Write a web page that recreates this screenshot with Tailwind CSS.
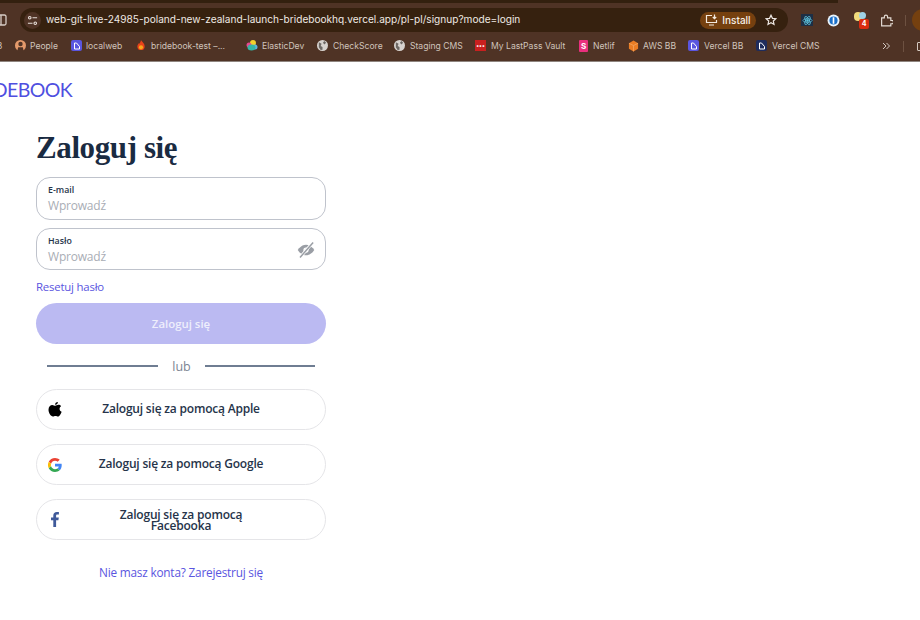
<!doctype html>
<html>
<head>
<meta charset="utf-8">
<title>Zaloguj się</title>
<script src="https://cdn.jsdelivr.net/npm/@tailwindcss/browser@4"></script>
</head>
<body class="h-[620px] w-[920px] overflow-hidden bg-white font-['Open_Sans',sans-serif]">

<!-- browser chrome -->
<div class="h-[62px] bg-[#4f3325] overflow-hidden border-b border-[#8f857f]">
  <div class="h-[3px] bg-[#33200f] w-[838px]"></div>
  <div class="h-[24px] mt-[5px] flex items-center font-['Inter',sans-serif]">
    <svg class="w-[7px] h-[12px] shrink-0" viewBox="0 0 7 12" fill="none" stroke="#d8cdc6" stroke-width="1.3"><rect x="-5" y="1" width="11" height="10" rx="1.5"/><path d="M1 1v10"/></svg>
    <div class="ml-[13px] w-[768px] h-[24px] rounded-full bg-[#36210f] flex items-center shrink-0">
      <div class="ml-[4px] w-[17px] h-[17px] rounded-full bg-[#4f3325] flex items-center justify-center">
        <svg class="w-[11px] h-[11px]" viewBox="0 0 12 12" fill="none" stroke="#e8e0da" stroke-width="1.2"><circle cx="3" cy="3" r="1.4"/><path d="M6 3h5M1 9h5"/><circle cx="9" cy="9" r="1.4"/></svg>
      </div>
      <span class="ml-[5px] text-[10.1px] text-[#efe9e4] whitespace-nowrap">web-git-live-24985-poland-new-zealand-launch-bridebookhq.vercel.app/pl-pl/signup?mode=login</span>
      <div class="ml-auto flex items-center">
        <div class="h-[17px] w-[56px] rounded-full bg-[#75400f] flex items-center justify-center gap-[4px]">
          <svg class="w-[13px] h-[12px]" viewBox="0 0 13 12" fill="none" stroke="#f3e9df" stroke-width="1.2"><path d="M7 1.500H1.500v7h10V6M4 11h5M9.500 0.500v4M7.800 3l1.700 1.700L11.200 3"/></svg>
          <span class="text-[10px] font-medium text-[#f6efe8]">Install</span>
        </div>
        <svg class="ml-[9px] mr-[11px] w-[12px] h-[12px]" viewBox="0 0 24 24" fill="none" stroke="#efe9e4" stroke-width="2.400"><path d="M12 2.500l2.900 6.200 6.700.8-5 4.600 1.400 6.700-6-3.400-6 3.400 1.400-6.700-5-4.600 6.700-.8z"/></svg>
      </div>
    </div>
    <div class="ml-[13px] w-[12px] h-[12px] bg-[#1d2f45] flex items-center justify-center shrink-0">
      <svg class="w-[11px] h-[11px]" viewBox="0 0 24 24" fill="none" stroke="#5fc4de" stroke-width="1.600"><ellipse cx="12" cy="12" rx="10" ry="4"/><ellipse cx="12" cy="12" rx="10" ry="4" transform="rotate(60 12 12)"/><ellipse cx="12" cy="12" rx="10" ry="4" transform="rotate(120 12 12)"/><circle cx="12" cy="12" r="2" fill="#5fc4de"/></svg>
    </div>
    <svg class="ml-[14px] w-[13px] h-[13px] shrink-0" viewBox="0 0 24 24"><circle cx="12" cy="12" r="11" fill="#e9f3fb"/><circle cx="12" cy="12" r="7.500" fill="#1a6fc9"/><rect x="10.500" y="6" width="3" height="12" fill="#fff"/></svg>
    <div class="relative ml-[14px] w-[12px] h-[14px] shrink-0">
      <div class="absolute left-0 top-[-1px] w-[8px] h-[9px] rounded-full bg-[#f2dc7c]"></div>
      <div class="absolute left-[5px] top-[-1px] w-[7px] h-[7px] rounded-full bg-[#9ed1e6]"></div>
      <div class="absolute left-[5px] top-[6px] w-[10px] h-[10px] rounded-[2px] bg-[#d92b0f] text-white text-[7px] font-bold leading-[10px] text-center">4</div>
    </div>
    <svg class="ml-[14px] w-[13px] h-[13px] shrink-0" viewBox="0 0 24 24" fill="none" stroke="#e4dbd4" stroke-width="2.200"><path d="M3 7h5V5a3 3 0 0 1 6 0v2h6v5h2a3 3 0 0 1 0 6h-2v4H3z"/></svg>
    <div class="ml-[12px] w-px h-[11px] bg-[#6d5141] shrink-0"></div>
    <div class="ml-[6px] w-[22px] h-[22px] rounded-full bg-[#75400f] shrink-0"></div>
  </div>
  <div class="h-[28px] flex items-center text-[8.6px] text-[#cfc4bc] font-['Inter',sans-serif] whitespace-nowrap">
    <span class="w-[18px] -ml-[3px] shrink-0">3</span>
    <div class="flex items-center w-[56px] gap-[4px] shrink-0">
      <svg class="w-[11px] h-[11px] shrink-0" viewBox="0 0 12 12"><circle cx="6" cy="6" r="6" fill="#e49a6b"/><circle cx="6" cy="4.400" r="2.400" fill="#4f3325"/><path d="M2.500 12l1-4h5l1 4z" fill="#4f3325"/></svg>
      <span>People</span>
    </div>
    <div class="flex items-center w-[65px] gap-[4px] shrink-0">
      <div class="w-[11px] h-[11px] rounded-[2px] bg-[#5a55e0] flex items-center justify-center shrink-0"><svg class="w-[8px] h-[8px]" viewBox="0 0 8 8" fill="none" stroke="#fff" stroke-width="1"><path d="M1.500 1h2l3 3.500v2.500h-5z"/></svg></div>
      <span>localweb</span>
    </div>
    <div class="flex items-center w-[110px] gap-[5px] shrink-0">
      <svg class="w-[10px] h-[11px] shrink-0" viewBox="0 0 10 12"><path d="M5 0c1 2 4 3.500 4 7a4 4 0 0 1-8 0c0-1.500 1-2.500 1.500-3.500C3 4.500 4 4 5 0z" fill="#e8431a"/><circle cx="5" cy="8" r="2.300" fill="#f7a81b"/></svg>
      <span>bridebook-test –...</span>
    </div>
    <div class="flex items-center w-[71px] gap-[4px] shrink-0">
      <svg class="w-[12px] h-[12px] shrink-0" viewBox="0 0 12 12"><circle cx="7" cy="3" r="3" fill="#f5cf2c"/><circle cx="3" cy="5" r="2.500" fill="#e8478f"/><circle cx="9" cy="7" r="2.500" fill="#5fb3e0"/><ellipse cx="5.500" cy="7.500" rx="4" ry="3" fill="#36b5a5"/></svg>
      <span>ElasticDev</span>
    </div>
    <div class="flex items-center w-[77px] gap-[5px] shrink-0">
      <svg class="w-[11px] h-[11px] shrink-0" viewBox="0 0 12 12"><circle cx="6" cy="6" r="6" fill="#d7d2ce"/><path d="M2 2.500l3 1.500-1 2.500 2 1v3l-2 .5-2-3zM8 1l2 2-2 2-1.500-2z" fill="#6d6864"/></svg>
      <span>CheckScore</span>
    </div>
    <div class="flex items-center w-[81px] gap-[5px] shrink-0">
      <svg class="w-[11px] h-[11px] shrink-0" viewBox="0 0 12 12"><circle cx="6" cy="6" r="6" fill="#d7d2ce"/><path d="M2 2.500l3 1.500-1 2.500 2 1v3l-2 .5-2-3zM8 1l2 2-2 2-1.500-2z" fill="#6d6864"/></svg>
      <span>Staging CMS</span>
    </div>
    <div class="flex items-center w-[103px] gap-[5px] shrink-0">
      <div class="w-[11px] h-[11px] bg-[#c9201f] flex items-center justify-center shrink-0 text-white text-[6px] leading-none font-bold">•••</div>
      <span>My LastPass Vault</span>
    </div>
    <div class="flex items-center w-[50px] gap-[5px] pl-[1px] shrink-0">
      <div class="w-[9px] h-[12px] rounded-[1px] bg-[#ea2f7d] flex items-center justify-center shrink-0 text-white text-[8px] leading-none font-bold">S</div>
      <span>Netlif</span>
    </div>
    <div class="flex items-center w-[60px] gap-[4px] shrink-0">
      <svg class="w-[11px] h-[12px] shrink-0" viewBox="0 0 12 12"><path d="M6 0l5 3v6l-5 3-5-3V3z" fill="#ea7d24"/><path d="M6 5.500l5-2.500M6 5.500L1 3M6 5.500V12" stroke="#f6ae6e" stroke-width=".7"/></svg>
      <span>AWS BB</span>
    </div>
    <div class="flex items-center w-[68px] gap-[5px] shrink-0">
      <div class="w-[11px] h-[11px] rounded-[2px] bg-[#5a55e0] flex items-center justify-center shrink-0"><svg class="w-[8px] h-[8px]" viewBox="0 0 8 8" fill="none" stroke="#fff" stroke-width="1"><path d="M1.500 1h2l3 3.500v2.500h-5z"/></svg></div>
      <span>Vercel BB</span>
    </div>
    <div class="flex items-center w-[126px] gap-[5px] shrink-0">
      <div class="w-[11px] h-[11px] rounded-[2px] bg-[#1f2c5c] flex items-center justify-center shrink-0"><svg class="w-[8px] h-[8px]" viewBox="0 0 8 8" fill="none" stroke="#fff" stroke-width="1"><path d="M1.500 1h2l3 3.500v2.500h-5z"/></svg></div>
      <span>Vercel CMS</span>
    </div>
    <svg class="w-[8px] h-[8px] shrink-0" viewBox="0 0 8 8" fill="none" stroke="#d4c9c1" stroke-width="1"><path d="M1 1l3 3-3 3M4.500 1l3 3-3 3"/></svg>
    <div class="ml-[13px] w-px h-[11px] bg-[#6d5141] shrink-0"></div>
    <div class="ml-[13px] w-[8px] h-[9px] border border-[#d4c9c1] rounded-[1px] shrink-0"></div>
  </div>
</div>

<!-- logo -->
<div class="h-[58px] relative overflow-hidden">
  <span class="absolute right-[848px] top-[17px] text-[19.5px] leading-[22px] text-[#4f4fe0] font-['Lato',sans-serif] tracking-[-0.6px]">BRIDEBOOK</span>
</div>

<!-- form -->
<div class="ml-[36px] w-[290px]">
  <h1 class="text-[31px] leading-[38px] font-bold text-[#1a2b42] font-['Liberation_Serif',serif] pt-[2px] mt-[7px] h-[38px] tracking-[-0.4px]">Zaloguj się</h1>
  <div class="mt-[12px] h-[43px] rounded-[14px] border border-[#bfc3cc] px-[11px] pt-[6px]">
    <div class="text-[8.800px] leading-[13px] font-semibold text-[#26344a]">E-mail</div>
    <div class="text-[12px] leading-[18px] tracking-[-0.2px] text-[#a9adb5]">Wprowadź</div>
  </div>
  <div class="mt-[8px] h-[42px] rounded-[14px] border border-[#bfc3cc] px-[11px] pt-[6px] flex justify-between">
    <div>
      <div class="text-[8.800px] leading-[13px] font-semibold text-[#26344a]">Hasło</div>
      <div class="text-[12px] leading-[18px] tracking-[-0.2px] text-[#a9adb5]">Wprowadź</div>
    </div>
    <svg class="w-[18px] h-[18px] mt-[6px] -mr-[1px]" viewBox="0 0 24 24" fill="none"><path d="M1 12s4-7 11-7 11 7 11 7-4 7-11 7S1 12 1 12z" fill="#9a9ea5"/><circle cx="12" cy="12" r="3.500" fill="#fff"/><circle cx="12" cy="12" r="1.600" fill="#9a9ea5"/><path d="M21 2L4 22" stroke="#fff" stroke-width="4"/><path d="M21.500 2L4 22" stroke="#9a9ea5" stroke-width="2"/></svg>
  </div>
  <a class="block mt-[9px] text-[11.400px] leading-[16px] tracking-[-0.2px] text-[#5a55e0]">Resetuj hasło</a>
  <div class="mt-[8px] h-[41px] rounded-full bg-[#bbbaf2] flex items-center justify-center text-[11.400px] font-semibold text-[#eeeefc]">Zaloguj się</div>
  <div class="mt-[14px] px-[11px] flex items-center h-[17px]">
    <div class="w-[111px] h-[2px] bg-[#6f7d92] -mt-[2px]"></div>
    <span class="flex-1 text-center text-[12.500px] text-[#7c8592] pt-[1px]">lub</span>
    <div class="w-[110px] h-[2px] bg-[#6f7d92] -mt-[2px]"></div>
  </div>
  <div class="mt-[14px] relative h-[41px] rounded-full border border-[#e5e5e8] flex items-center justify-center text-[12px] tracking-[-0.2px] font-semibold text-[#26344a]">
    <svg class="absolute left-[11px] top-[12px] w-[14px] h-[16px]" viewBox="0 0 14 16"><path d="M7.300 3.700c.8 0 1.800-.9 3.100-.9 1.100 0 2.100.5 2.700 1.400-2.200 1.300-1.900 4.500.5 5.500-.5 1.500-2 4.800-3.600 4.800-.9 0-1.400-.6-2.500-.6s-1.700.6-2.600.6C2.800 14.500.5 10.900.5 7.800c0-3 1.900-4.900 3.800-4.900 1.200 0 2.200.8 3 .8zM7 2.800C7 1.300 8.300 0 9.900 0c.1 1.600-1.300 3-2.900 2.800z" fill="#000"/></svg>
    <span class="-mt-[1px]">Zaloguj się za pomocą Apple</span>
  </div>
  <div class="mt-[14px] relative h-[41px] rounded-full border border-[#e5e5e8] flex items-center justify-center text-[12px] tracking-[-0.2px] font-semibold text-[#26344a]">
    <svg class="absolute left-[11px] top-[13px] w-[14px] h-[14px]" viewBox="0 0 48 48"><path fill="#EA4335" d="M24 9.500c3.500 0 6.700 1.200 9.200 3.600l6.900-6.900C35.900 2.400 30.400 0 24 0 14.600 0 6.500 5.400 2.600 13.200l8 6.200C12.500 13.700 17.800 9.500 24 9.500z"/><path fill="#4285F4" d="M47 24.500c0-1.600-.1-3.100-.4-4.500H24v9h12.900c-.6 3-2.200 5.500-4.800 7.200l7.700 6c4.500-4.200 7.200-10.300 7.200-17.700z"/><path fill="#FBBC05" d="M10.600 28.600A14.500 14.500 0 0 1 10.600 19.400l-8-6.200a24 24 0 0 0 0 21.600z"/><path fill="#34A853" d="M24 48c6.500 0 11.900-2.100 15.900-5.800l-7.700-6c-2.200 1.400-4.900 2.300-8.200 2.300-6.200 0-11.500-4.200-13.400-9.900l-8 6.200C6.500 42.600 14.600 48 24 48z"/></svg>
    <span class="-mt-[1px]">Zaloguj się za pomocą Google</span>
  </div>
  <div class="mt-[14px] relative h-[41px] rounded-full border border-[#e5e5e8] flex items-center justify-center text-center text-[12px] tracking-[-0.2px] leading-[11.500px] font-semibold text-[#26344a]">
    <svg class="absolute left-[14px] top-[12px] w-[8px] h-[15px]" viewBox="0 0 8 15"><path d="M2.300 15V8.300H0V5.600h2.300V3.600C2.300 1.300 3.700 0 5.800 0c1 0 1.800.1 2.100.1v2.400H6.500c-1.100 0-1.400.5-1.400 1.300v1.800h2.700l-.4 2.700H5.100V15z" fill="#3f5a9a"/></svg>
    <span class="w-[150px] mt-[1px]">Zaloguj się za pomocą Facebooka</span>
  </div>
  <a class="block mt-[24px] text-center text-[11.800px] leading-[16px] tracking-[-0.2px] font-medium text-[#5a55e0]">Nie masz konta? Zarejestruj się</a>
</div>
</body>
</html>
